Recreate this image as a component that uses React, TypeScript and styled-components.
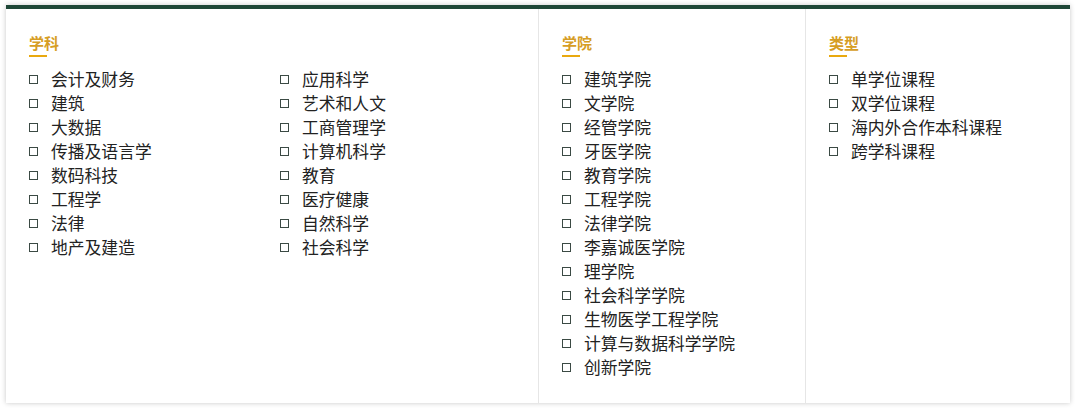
import React from 'react';
import styled, { createGlobalStyle } from 'styled-components';

const GlobalStyle = createGlobalStyle`
  html, body {
    margin: 0;
    padding: 0;
    background: #ffffff;
  }

  body {
    font-family: 'Noto Sans CJK SC', 'Noto Sans', sans-serif;
    color: #222222;
  }
`;

const Card = styled.section`
  margin: 5px 10px 11px 6px;
  height: 398px;
  box-sizing: border-box;
  border-top: 4px solid #1e4737;
  background: #ffffff;
  box-shadow: 0 0 5px rgba(0, 0, 0, 0.22);
  display: grid;
  grid-template-columns: 532px 267px 1fr;
`;

const Column = styled.div<{ $divider?: boolean }>`
  padding: 24px 0 0 23px;
  border-left: ${(p) => (p.$divider ? '1px solid #e6e6e6' : 'none')};
  box-sizing: border-box;
`;

const Heading = styled.h3`
  margin: 0;
  font-size: 15px;
  line-height: 20px;
  font-weight: 600;
  color: #d69d24;

  &::after {
    content: '';
    display: block;
    width: 18px;
    height: 2px;
    margin-top: 2px;
    background: #e9a90f;
  }
`;

const Lists = styled.div<{ $split?: boolean }>`
  display: grid;
  grid-template-columns: ${(p) => (p.$split ? '251px 1fr' : '1fr')};
  margin-top: 10px;
`;

const List = styled.ul`
  list-style: none;
  margin: 0;
  padding: 0;
`;

const Item = styled.li`
  display: flex;
  align-items: center;
  height: 24px;
  font-size: 16.8px;
  line-height: 24px;
  color: #222222;
  white-space: nowrap;

  &::before {
    content: '';
    flex: none;
    width: 9px;
    height: 9px;
    box-sizing: border-box;
    border: 1.5px solid #3b4a44;
    margin-right: 13px;
  }
`;

const subjectsA = ['会计及财务', '建筑', '大数据', '传播及语言学', '数码科技', '工程学', '法律', '地产及建造'];
const subjectsB = ['应用科学', '艺术和人文', '工商管理学', '计算机科学', '教育', '医疗健康', '自然科学', '社会科学'];
const faculties = [
  '建筑学院',
  '文学院',
  '经管学院',
  '牙医学院',
  '教育学院',
  '工程学院',
  '法律学院',
  '李嘉诚医学院',
  '理学院',
  '社会科学学院',
  '生物医学工程学院',
  '计算与数据科学学院',
  '创新学院',
];
const types = ['单学位课程', '双学位课程', '海内外合作本科课程', '跨学科课程'];

const renderList = (items: string[]) => (
  <List>
    {items.map((item) => (
      <Item key={item}>{item}</Item>
    ))}
  </List>
);

export default function App() {
  return (
    <>
      <GlobalStyle />
      <Card>
        <Column>
          <Heading>学科</Heading>
          <Lists $split>
            {renderList(subjectsA)}
            {renderList(subjectsB)}
          </Lists>
        </Column>
        <Column $divider>
          <Heading>学院</Heading>
          <Lists>{renderList(faculties)}</Lists>
        </Column>
        <Column $divider>
          <Heading>类型</Heading>
          <Lists>{renderList(types)}</Lists>
        </Column>
      </Card>
    </>
  );
}
